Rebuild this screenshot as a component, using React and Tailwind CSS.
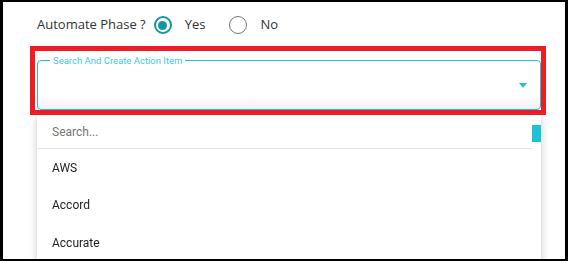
import { useState } from 'react';

const items = ['AWS', 'Accord', 'Accurate'];

function Radio({ checked, label, onClick }) {
  return (
    <button type="button" onClick={onClick} className="flex items-center gap-[13px]">
      {checked ? (
        <span className="w-[18px] h-[18px] rounded-full border-2 border-[#11979d] flex items-center justify-center">
          <span className="w-[9px] h-[9px] rounded-full bg-[#11979d]" />
        </span>
      ) : (
        <span className="w-[18px] h-[18px] rounded-full border-[1.5px] border-[#767676]" />
      )}
      <span className="text-[13px] text-[#333]">{label}</span>
    </button>
  );
}

export default function App() {
  const [automate, setAutomate] = useState(true);

  return (
    <div
      className="w-[568px] h-[261px] bg-white border-black border-l-[3px] border-r-[3px] border-t-2 border-b-2 overflow-hidden"
      style={{ fontFamily: '"Open Sans", sans-serif' }}
    >
      <div className="pl-[34px] pr-[24px] pt-[14px]">
        <div className="flex items-center h-[18px]">
          <span className="text-[13px] text-[#333] mr-[8px]">Automate Phase ?</span>
          <div className="flex items-center gap-[24px]">
            <Radio checked={automate} label="Yes" onClick={() => setAutomate(true)} />
            <Radio checked={!automate} label="No" onClick={() => setAutomate(false)} />
          </div>
        </div>

        <div className="relative mt-[21px] w-[504px]" style={{ fontFamily: 'Roboto, sans-serif' }}>
          <fieldset className="border border-[#1cc3dc] rounded-[4px] h-[55px] px-[12px] bg-gradient-to-b from-white from-70% to-[#f3f3f3]">
            <legend className="px-[3px] text-[9.5px] leading-[11px] text-[#3ccbe0]">
              Search And Create Action Item
            </legend>
            <div className="flex justify-end pt-[17px] pr-[1px]">
              <span className="w-0 h-0 border-l-[4px] border-r-[4px] border-t-[5px] border-l-transparent border-r-transparent border-t-[#1cc3dc]" />
            </div>
          </fieldset>

          <div className="absolute left-[-7px] right-[-5px] top-[-9px] bottom-[-5px] border-[5px] border-[#ee1c25] z-10 pointer-events-none" />

          <div className="absolute top-full left-0 right-0 mt-[5px] bg-white shadow-[0_2px_8px_rgba(0,0,0,0.22)] flex">
            <div className="flex-1">
              <div className="h-[34px] flex items-center pl-[15px] border-b border-[#e3e3e3]">
                <input
                  type="text"
                  placeholder="Search..."
                  className="w-full text-[12px] text-[#333] placeholder-[#757575] outline-none caret-black"
                  autoFocus
                />
              </div>
              {items.map(item => (
                <div key={item} className="h-[37.5px] flex items-center pl-[15px] text-[12px] text-[#222]">
                  {item}
                </div>
              ))}
            </div>
            <div className="w-[9px]">
              <div className="mt-[10px] h-[17px] bg-[#1cc3d6]" />
            </div>
          </div>
        </div>
      </div>
    </div>
  );
}
